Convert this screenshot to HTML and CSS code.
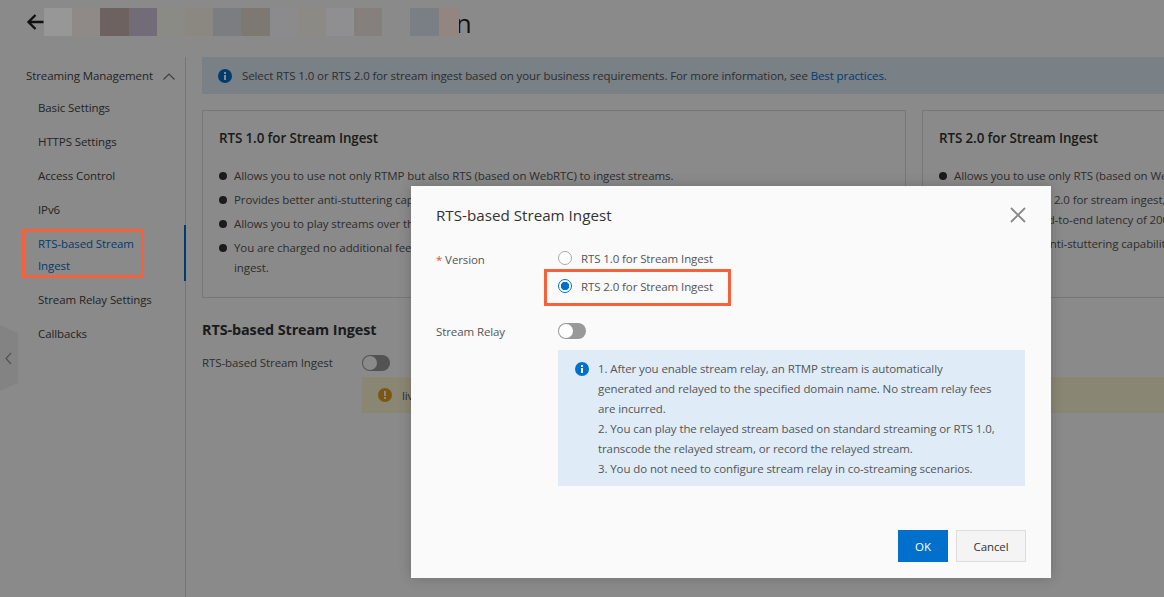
FILE: index.html
```html
<!DOCTYPE html>
<html lang="en">
<head>
    <meta charset="UTF-8">
    <meta name="viewport" content="width=device-width, initial-scale=1.0">
    <title>RTS-based Stream Ingest</title>
    <link rel="stylesheet" href="styles.css">
</head>
<body>
    <header class="topbar">
        <svg class="back" width="18" height="18" viewBox="0 0 18 18"><path d="M17.500 9H2.500M9.500 2L2.500 9l7 7" fill="none" stroke="#111" stroke-width="2.4"/></svg>
        <div class="blur">
            <span class="b1"></span><span class="b2"></span><span class="b3"></span><span class="b4"></span><span class="b5"></span>
            <span class="b6"></span><span class="b7"></span><span class="b8"></span><span class="b9"></span><span class="b10"></span>
            <span class="b11"></span><span class="b12"></span><span class="b13"></span><span class="b14"></span><span class="b15"></span>
        </div>
        <span class="page-title">n</span>
    </header>

    <div class="layout">
        <nav class="sidebar">
            <div class="nav-group">
                <span>Streaming Management</span>
                <svg width="12" height="7" viewBox="0 0 12 7"><path d="M.5 6.500L6 1l5.500 5.500" fill="none" stroke="#777" stroke-width="1.200"/></svg>
            </div>
            <a class="nav-item">Basic Settings</a>
            <a class="nav-item">HTTPS Settings</a>
            <a class="nav-item">Access Control</a>
            <a class="nav-item">IPv6</a>
            <a class="nav-item active">RTS-based Stream Ingest</a>
            <a class="nav-item">Stream Relay Settings</a>
            <a class="nav-item">Callbacks</a>
        </nav>

        <main class="content">
            <div class="alert">
                <svg class="info-icon" width="14" height="14" viewBox="0 0 14 14"><circle cx="7" cy="7" r="7" fill="#0070cc"/><rect x="6" y="6" width="2" height="5" fill="#fff"/><rect x="6" y="3" width="2" height="2" fill="#fff"/></svg>
                <span>Select RTS 1.0 or RTS 2.0 for stream ingest based on your business requirements. For more information, see <a class="link">Best practices.</a></span>
            </div>

            <div class="cards">
                <section class="card">
                    <h3>RTS 1.0 for Stream Ingest</h3>
                    <ul>
                        <li>Allows you to use not only RTMP but also RTS (based on WebRTC) to ingest streams.</li>
                        <li>Provides better anti-stuttering capabilities than standard streaming when you ingest streams.</li>
                        <li>Allows you to play streams over the RTS or standard streaming protocols based on your needs.</li>
                        <li>You are charged no additional fees for stream ingest when you use RTS 1.0 for stream ingest, and you are only charged for stream<br>ingest.</li>
                    </ul>
                </section>
                <section class="card">
                    <h3>RTS 2.0 for Stream Ingest</h3>
                    <ul>
                        <li>Allows you to use only RTS (based on WebRTC) to ingest streams.</li>
                        <li>When you use RTS 2.0 for stream ingest, you<br>can achieve an end-to-end latency of 200 ms.</li>
                        <li>Provides greater anti-stuttering capabilities.</li>
                    </ul>
                </section>
            </div>

            <h2 class="section-title">RTS-based Stream Ingest</h2>
            <div class="setting">
                <span class="setting-label">RTS-based Stream Ingest</span>
                <div class="setting-body">
                    <span class="switch"></span>
                    <div class="warning">
                        <svg width="14" height="14" viewBox="0 0 14 14"><circle cx="7" cy="7" r="7" fill="#e6a023"/><rect x="6" y="3" width="2" height="5" fill="#fff"/><rect x="6" y="9" width="2" height="2" fill="#fff"/></svg>
                        <span>live</span>
                    </div>
                </div>
            </div>
        </main>
    </div>

    <div class="handle">
        <svg width="7" height="13" viewBox="0 0 7 13"><path d="M6 1L1 6.500 6 12" fill="none" stroke="#999" stroke-width="1.200"/></svg>
    </div>

    <div class="mask"></div>
    <div class="mark mark-nav"></div>

    <div class="dialog">
        <div class="dialog-head">
            <span>RTS-based Stream Ingest</span>
            <svg width="16" height="16" viewBox="0 0 16 16"><path d="M1 1l14 14M15 1L1 15" fill="none" stroke="#888" stroke-width="1.800"/></svg>
        </div>
        <div class="form-row version-row">
            <label class="form-label"><i>*</i> Version</label>
            <div class="radios">
                <div class="radio-row"><span class="radio"></span>RTS 1.0 for Stream Ingest</div>
                <div class="radio-row"><span class="radio checked"></span>RTS 2.0 for Stream Ingest</div>
                <div class="mark mark-radio"></div>
            </div>
        </div>
        <div class="form-row relay-row">
            <label class="form-label">Stream Relay</label>
            <span class="switch"></span>
        </div>
        <div class="note">
            <svg width="14" height="14" viewBox="0 0 14 14"><circle cx="7" cy="7" r="7" fill="#0070cc"/><rect x="6" y="6" width="2" height="5" fill="#fff"/><rect x="6" y="3" width="2" height="2" fill="#fff"/></svg>
            <p>1. After you enable stream relay, an RTMP stream is automatically<br>
            generated and relayed to the specified domain name. No stream relay fees<br>
            are incurred.<br>
            2. You can play the relayed stream based on standard streaming or RTS 1.0,<br>
            transcode the relayed stream, or record the relayed stream.<br>
            3. You do not need to configure stream relay in co-streaming scenarios.</p>
        </div>
        <div class="dialog-foot">
            <button class="btn primary">OK</button>
            <button class="btn">Cancel</button>
        </div>
    </div>
</body>
</html>
```

FILE: styles.css
```css
body {
    font-family: "Open Sans", Arial, sans-serif;
    font-size: 11.5px;
    letter-spacing: -0.1px;
    margin: 0;
    height: 597px;
    background: #fff;
    color: #333;
    overflow: hidden;
    position: relative;
}

.topbar {
    height: 46px;
    padding: 8px 0 0 26px;
    box-sizing: border-box;
    display: flex;
    align-items: flex-start;
}

.back {
    margin-top: 5px;
    flex: none;
    position: relative;
    z-index: 20;
}

.blur {
    display: flex;
    height: 28px;
    position: relative;
    z-index: 21;
}

.blur span {
    width: 28.2px;
}

.b1 { background: #979797; }
.b2 { background: #8f8a88; }
.b3 { background: #6d625f; }
.b4 { background: #716c77; }
.b5 { background: #8b8b85; }
.b6 { background: #8b8781; }
.b7 { background: #7b7d80; }
.b8 { background: #7d7972; }
.b9 { background: #8b8b8e; }
.b10 { background: #8c8a84; }
.b11 { background: #8f8f91; }
.b12 { background: #85807d; }
.b13 { background: #8a8a8a; }
.b14 { background: #7a7f85; }
.blur .b15 { background: #938580; width: 20px; }

.page-title {
    font-size: 26px;
    line-height: 30px;
    color: #111;
    margin-left: -3px;
    position: relative;
    z-index: 20;
}

.layout {
    display: flex;
    margin-top: 11px;
    height: 540px;
}

.sidebar {
    width: 186px;
    flex: none;
    box-sizing: border-box;
    border-right: 1px solid #d8d8d8;
    position: relative;
    padding-left: 26px;
}

.nav-group {
    height: 34px;
    line-height: 38px;
    color: #444;
    white-space: nowrap;
    display: flex;
    justify-content: space-between;
    align-items: center;
    padding: 4px 10px 0 0;
    box-sizing: border-box;
}

.nav-group span {
    line-height: 30px;
}

.nav-item {
    display: block;
    padding: 6px 20px 6px 12px;
    line-height: 22px;
    color: #444;
    position: relative;
}

.nav-item.active {
    color: #0070cc;
}

.nav-item.active::after {
    content: "";
    position: absolute;
    right: -1px;
    top: -2px;
    bottom: 2px;
    width: 2px;
    background: #0070cc;
}

.content {
    flex: 1;
    min-width: 0;
    padding-left: 16px;
}

.alert {
    height: 37px;
    width: 1200px;
    background: #dfecf8;
    display: flex;
    align-items: center;
    padding-left: 16px;
    box-sizing: border-box;
    color: #555;
    white-space: nowrap;
}

.info-icon {
    margin-right: 10px;
    flex: none;
}

.link {
    color: #0070cc;
}

.cards {
    display: flex;
    gap: 16px;
    margin-top: 16px;
}

.card {
    width: 704px;
    height: 188px;
    flex: none;
    box-sizing: border-box;
    border: 1px solid #ddd;
    padding: 17px 16px;
}

.card h3 {
    margin: 0;
    font-size: 13.4px;
    line-height: 20px;
    font-weight: 600;
    color: #333;
}

.card ul {
    margin: 18px 0 0;
    padding: 0;
    list-style: none;
}

.card li {
    position: relative;
    padding-left: 15px;
    line-height: 20px;
    margin-bottom: 4px;
    color: #555;
    white-space: nowrap;
}

.card li::before {
    content: "";
    position: absolute;
    left: 0;
    top: 6px;
    width: 8px;
    height: 8px;
    border-radius: 50%;
    background: #333;
}

.section-title {
    margin: 21px 0 0;
    font-size: 14.4px;
    line-height: 22px;
    font-weight: 700;
    color: #333;
}

.setting {
    display: flex;
    margin-top: 11px;
}

.setting-label {
    width: 160px;
    flex: none;
    line-height: 22px;
    color: #555;
}

.setting-body {
    flex: 1;
    padding-top: 3px;
}

.switch {
    display: block;
    width: 28px;
    height: 16px;
    border-radius: 8px;
    background: #999;
    position: relative;
    box-sizing: border-box;
}

.switch::before {
    content: "";
    position: absolute;
    left: 1px;
    top: 1px;
    width: 14px;
    height: 14px;
    border-radius: 50%;
    background: #fff;
}

.warning {
    margin-top: 6px;
    height: 36px;
    width: 900px;
    background: #fff7d6;
    display: flex;
    align-items: center;
    gap: 10px;
    padding-left: 16px;
    box-sizing: border-box;
    color: #555;
}

.handle {
    position: absolute;
    left: 0;
    top: 325px;
    width: 18px;
    height: 66px;
    background: #f2f2f2;
    clip-path: polygon(0 0, 100% 12%, 100% 88%, 0 100%);
    display: flex;
    align-items: center;
    padding-left: 5px;
    box-sizing: border-box;
}

.mask {
    position: absolute;
    inset: 0;
    background: rgba(0, 0, 0, 0.46);
    z-index: 10;
}

.mark {
    position: absolute;
    border: 3px solid #f4613a;
    box-sizing: border-box;
    z-index: 20;
}

.mark-nav {
    left: 22px;
    top: 229px;
    width: 122px;
    height: 49px;
}

.mark-radio {
    left: -14px;
    top: 25px;
    width: 187px;
    height: 37px;
}

.dialog {
    position: absolute;
    left: 411px;
    top: 186px;
    width: 640px;
    height: 392px;
    background: #fafafa;
    z-index: 30;
    box-shadow: 0 0 12px rgba(0, 0, 0, 0.2);
    padding: 0 25px;
    box-sizing: border-box;
    color: #555;
}

.dialog-head {
    height: 58px;
    display: flex;
    justify-content: space-between;
    align-items: center;
    font-size: 15.2px;
    letter-spacing: 0;
    color: #333;
}

.form-row {
    display: flex;
}

.form-label {
    width: 122px;
    flex: none;
}

.form-label i {
    color: #e84738;
    font-style: normal;
}

.version-row .form-label {
    line-height: 32px;
}

.radios {
    position: relative;
}

.radio-row {
    height: 28px;
    display: flex;
    align-items: center;
    gap: 9px;
    white-space: nowrap;
}

.radio {
    width: 14px;
    height: 14px;
    border: 1px solid #aaa;
    border-radius: 50%;
    box-sizing: border-box;
    background: #fff;
}

.radio.checked {
    border-color: #0070cc;
    background: radial-gradient(circle, #0070cc 0, #0070cc 4px, #fff 4.500px);
}

.relay-row {
    margin-top: 21px;
    align-items: center;
    height: 20px;
}

.note {
    margin: 9px 1px 0 122px;
    height: 136px;
    background: #dfecf8;
    padding: 9px 16px 0 17px;
    box-sizing: border-box;
    display: flex;
    gap: 9px;
}

.note svg {
    flex: none;
    margin-top: 3px;
}

.note p {
    margin: 0;
    line-height: 20px;
    white-space: nowrap;
}

.dialog-foot {
    margin-top: 44px;
    display: flex;
    justify-content: flex-end;
    gap: 8px;
}

.btn {
    font-family: inherit;
    font-size: inherit;
    letter-spacing: inherit;
    height: 32px;
    width: 70px;
    border: 1px solid #ddd;
    background: #f4f4f4;
    color: #333;
    padding: 0;
}

.btn.primary {
    width: 50px;
    border: none;
    background: #0070cc;
    color: #fff;
}
```
